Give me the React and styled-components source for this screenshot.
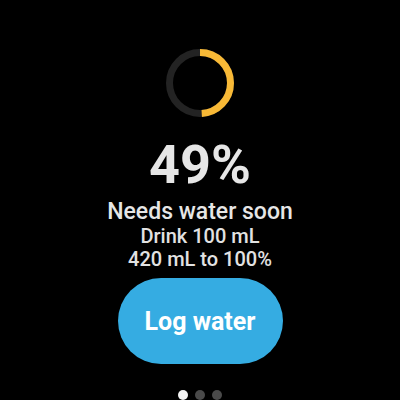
import React from "react";
import styled, { createGlobalStyle } from "styled-components";

const Global = createGlobalStyle`
  html, body { margin: 0; padding: 0; background: #000; }
  body { font-family: Roboto, "Noto Sans", sans-serif; }
`;

const Screen = styled.div`
  width: 400px;
  height: 400px;
  background: #000;
  display: flex;
  flex-direction: column;
  align-items: center;
  padding-top: 49px;
  box-sizing: border-box;
  color: #e4e4e4;
`;

const Ring = styled.svg`
  display: block;
  width: 68px;
  height: 68px;
`;

const Percent = styled.div`
  margin-top: 21px;
  font-size: 54px;
  line-height: 54px;
  font-weight: 700;
  color: #e6e6e6;
`;

const Status = styled.div`
  margin-top: 6px;
  font-size: 23px;
  line-height: 27px;
  font-weight: 500;
  color: #e6e6e6;
`;

const Detail = styled.div`
  font-size: 20px;
  line-height: 23px;
  font-weight: 500;
  color: #e2e2e2;
`;

const LogButton = styled.button`
  margin-top: 7px;
  width: 165px;
  height: 86px;
  border: none;
  border-radius: 43px;
  background: #35ace2;
  color: #fff;
  font-family: Roboto, sans-serif;
  font-size: 25px;
  font-weight: 700;
  padding: 0;
`;

const Dots = styled.div`
  margin-top: 26px;
  display: flex;
  gap: 7px;
`;

const Dot = styled.span`
  width: 10px;
  height: 10px;
  border-radius: 50%;
  background: ${(p) => (p.$active ? "#f4f4f4" : "#4a4a4a")};
`;

function ProgressRing({ value }) {
  const r = 30.5;
  const c = 2 * Math.PI * r;
  return (
    <Ring viewBox="0 0 68 68">
      <circle cx="34" cy="34" r={r} fill="none" stroke="#232323" strokeWidth="7" />
      <circle
        cx="34"
        cy="34"
        r={r}
        fill="none"
        stroke="#f8b936"
        strokeWidth="7"
        strokeDasharray={`${c * value} ${c}`}
        transform="rotate(-90 34 34)"
      />
    </Ring>
  );
}

export default function App() {
  return (
    <>
      <Global />
      <Screen>
        <ProgressRing value={0.49} />
        <Percent>49%</Percent>
        <Status>Needs water soon</Status>
        <Detail>Drink 100 mL</Detail>
        <Detail>420 mL to 100%</Detail>
        <LogButton>Log water</LogButton>
        <Dots>
          <Dot $active />
          <Dot />
          <Dot />
        </Dots>
      </Screen>
    </>
  );
}
